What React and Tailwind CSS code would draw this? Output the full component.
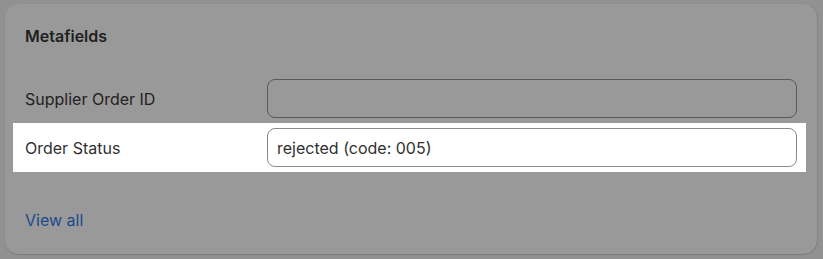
export default function App() {
  const font = { fontFamily: "Inter, 'Noto Sans', sans-serif" };
  return (
    <div className="w-[823px] h-[259px] bg-[#919191] pt-[4px] pl-[5px]" style={font}>
      <div className="w-[812px] h-[250px] bg-[#999999] rounded-[14px] shadow-[0_1px_1px_rgba(0,0,0,0.15),1px_0_1px_rgba(0,0,0,0.08)] px-5 pt-[22px]">
        <div className="text-[16px] font-semibold text-[#1f1f1f] leading-5 h-5">Metafields</div>
        <div className="mt-[33px] flex items-center h-[39px]">
          <div className="w-[242px] text-[16px] text-[#222] leading-5">Supplier Order ID</div>
          <div className="flex-1 h-[39px] rounded-[8px] border border-[#5a5a5a]"></div>
        </div>
        <div className="mt-[5px] -ml-3 -mr-[9px] pl-3 pr-[9px] bg-white h-[49px] flex items-center">
          <div className="w-[242px] text-[16px] text-[#303030] leading-5">Order Status</div>
          <div className="flex-1 h-[39px] rounded-[8px] border border-[#8a8a8a] flex items-center px-[9px] text-[16px] text-[#303030]">
            rejected (code: 005)
          </div>
        </div>
        <div className="mt-[38px] text-[16px] text-[#1c4a8e] leading-5">View all</div>
      </div>
    </div>
  );
}
